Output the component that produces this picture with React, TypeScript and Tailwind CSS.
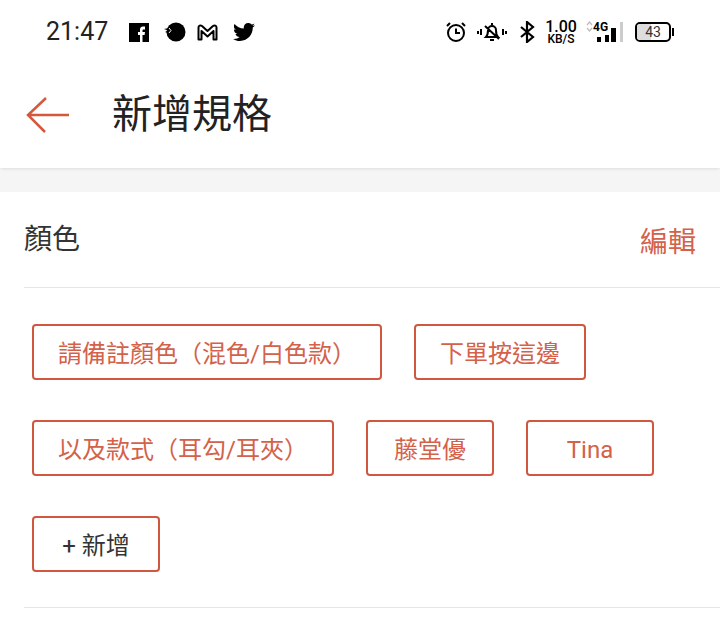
import { FaTwitter } from "react-icons/fa"

const cjk = "font-['Roboto','Noto_Sans_CJK_TC',sans-serif]"

function Tag({ label, w }: { label: string; w: string }) {
  return (
    <div className={`${w} h-14 pt-1 rounded border-2 border-[#d0583f] flex items-center justify-center text-[24px] text-[#d4614a] whitespace-nowrap`}>
      {label}
    </div>
  )
}

function StatusBar() {
  return (
    <div className="h-16 pl-[46px] pr-[46px] flex items-center justify-between text-[#222]">
      <div className="flex items-center">
        <span className="text-[25px] w-[83px] font-['Roboto',sans-serif]">21:47</span>
        <div className="flex items-center">
          <svg width="20" height="19" viewBox="0 0 20 19" className="mr-[15px]">
            <rect width="20" height="19" fill="#000" />
            <path d="M11 19v-7H9V9h2V6.500C11 4.500 12.200 3.500 14 3.500h2v3h-1.500c-.7 0-1 .3-1 1V9H16l-.4 3h-2.100v7z" fill="#fff" />
          </svg>
          <svg width="22" height="20" viewBox="0 0 22 20" className="mr-[11px]">
            <circle cx="12" cy="10" r="9.500" fill="#000" />
            <path d="M0 7l5-1 1-3 3 3-4 3 3 3-3 2-1-3-3-1 3-1.500z" fill="#000" />
            <path d="M5 6l2 2.500L5 11" fill="none" stroke="#fff" strokeWidth="1" />
          </svg>
          <svg width="21" height="17" viewBox="0 0 21 17" className="mr-[15px]">
            <path d="M1.500 15.500V3.500C1.500 1.500 3.500 1 5 2l5.500 5L16 2c1.500-1 3.500-.5 3.500 1.500v12h-3V7l-6 5.500L4.500 7v8.500z" fill="#fff" stroke="#000" strokeWidth="2" strokeLinejoin="round" />
          </svg>
          <FaTwitter className="w-[22px] h-[22px] text-black" />
        </div>
      </div>
      <div className="flex items-center">
        <svg width="22" height="22" viewBox="0 0 22 22" fill="none" stroke="#000" strokeWidth="2" className="mr-[10px]">
          <circle cx="11" cy="12" r="8" />
          <path d="M11 7.500V12h4M2 5l3-3M20 5l-3-3" />
        </svg>
        <svg width="30" height="22" viewBox="0 0 30 22" fill="none" stroke="#000" strokeWidth="2" className="mr-[12px]">
          <path d="M9 16c2-2 2-4 2-7a4 4 0 0 1 8 0c0 3 0 5 2 7zM13 19h4M15 2v2M8 5l14 13" />
          <path d="M1 10v3M4 8v6M26 8v6M29 10v3" />
        </svg>
        <svg width="16" height="22" viewBox="0 0 16 22" fill="none" stroke="#000" strokeWidth="2.200" className="mr-[10px]">
          <path d="M2 6l12 10-6 5V1l6 5L2 16" />
        </svg>
        <div className="flex flex-col items-center w-8 font-['Roboto',sans-serif] text-black mr-[9px]">
          <span className="text-[16px] leading-[13px] font-medium">1.00</span>
          <span className="text-[12px] leading-[12px] font-medium">KB/S</span>
        </div>
        <div className="relative w-[38px] h-[22px] mr-[11px]">
          <svg width="38" height="22" viewBox="0 0 38 22" className="absolute left-0 top-0">
            <path d="M1 4l2.500-3L6 4M1 7l2.500 3L6 7" fill="none" stroke="#bbb" strokeWidth="1.200" />
            <rect x="11" y="16" width="4" height="5" fill="#000" />
            <rect x="19" y="14" width="4" height="7" fill="#000" />
            <rect x="25" y="7" width="5" height="14" fill="#000" />
            <rect x="34" y="1" width="3" height="20" fill="#ccc" />
          </svg>
          <span className="absolute left-[7px] top-0 text-[12px] leading-[12px] font-bold text-black font-['Roboto',sans-serif]">4G</span>
        </div>
        <div className="relative w-9 h-[20px] rounded-[5px] border-2 border-black bg-white overflow-hidden flex items-center justify-center">
          <div className="absolute left-0 top-0 bottom-0 w-[43%] bg-[#ddd]" />
          <span className="relative text-[14px] leading-none text-[#333] font-['Roboto',sans-serif]">43</span>
        </div>
        <div className="w-[2px] h-[8px] bg-black ml-[1px]" />
      </div>
    </div>
  )
}

export default function App() {
  return (
    <main className={`w-[720px] h-[635px] overflow-hidden bg-white ${cjk}`}>
      <StatusBar />
      <header className="h-[104px] bg-white shadow-[0_2px_3px_-1px_rgba(0,0,0,0.1)] relative flex items-center pl-[26px] pb-[3px]">
        <svg width="44" height="38" viewBox="0 0 44 38" fill="none" stroke="#d4583c" strokeWidth="2.500" className="mr-[42px]">
          <path d="M43 19H3M20 2L2 19l17 17" />
        </svg>
        <h1 className="text-[40px] text-[#222]">新增規格</h1>
      </header>
      <div className="h-6 bg-[#f5f5f5]" />
      <section className="pl-6">
        <div className="h-24 border-b border-[#e5e5e5] flex items-center justify-between pr-6">
          <span className="text-[28px] text-[#333] mt-[1px]">顏色</span>
          <span className="text-[28px] text-[#d4614a] mt-[6px]">編輯</span>
        </div>
        <div className="border-b border-[#e5e5e5] pl-2 pt-9 pb-[35px] flex flex-col gap-10">
          <div className="flex gap-8">
            <Tag label="請備註顏色（混色/白色款）" w="w-[350px]" />
            <Tag label="下單按這邊" w="w-[172px]" />
          </div>
          <div className="flex gap-8">
            <Tag label="以及款式（耳勾/耳夾）" w="w-[302px]" />
            <Tag label="藤堂優" w="w-32" />
            <Tag label="Tina" w="w-32" />
          </div>
          <div className="w-32 h-14 pt-1 rounded border-2 border-[#d0583f] flex items-center justify-center text-[24px] text-[#333]">
            + 新增
          </div>
        </div>
      </section>
    </main>
  )
}
